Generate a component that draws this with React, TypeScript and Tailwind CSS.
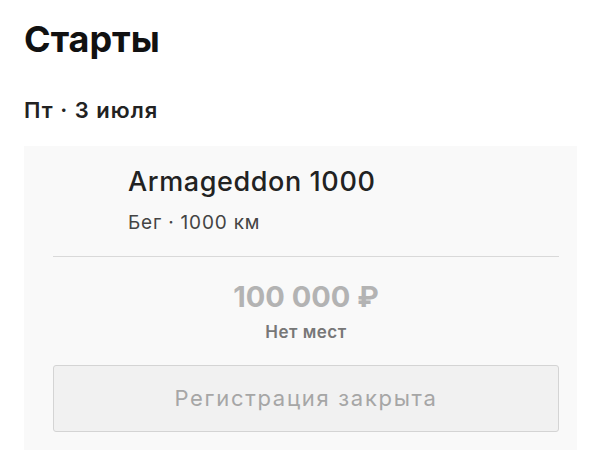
export default function App() {
  return (
    <div className="w-[600px] h-[462px] bg-white px-6 pt-[19px] font-['Inter',sans-serif] text-[#111]">
      <h1 className="text-[36px] leading-[40px] font-bold">Старты</h1>
      <div className="mt-[38px] text-[22px] leading-[26px] font-semibold tracking-[1px] text-[#222]">Пт · 3 июля</div>

      <div className="mt-[23px] w-[553px] bg-[#f9f9f9] pl-[29px] pr-[18px] pt-5 pb-[18px]">
        <div className="pl-[75px]">
          <div className="text-[27px] leading-[32px] font-medium tracking-[0.6px] text-[#222]">Armageddon 1000</div>
          <div className="mt-[13px] text-[19px] leading-[24px] tracking-[0.8px] text-[#444]">Бег · 1000 км</div>
        </div>

        <div className="mt-[21px] h-px bg-[#d9d9d9]" />

        <div className="mt-6 flex flex-col items-center">
          <div className="text-[29px] leading-[32px] font-bold text-[#b3b3b3]">100 000 ₽</div>
          <div className="mt-[9px] text-[17px] leading-[20px] font-semibold tracking-[0.5px] text-[#777]">Нет мест</div>
        </div>

        <button
          disabled
          className="mt-[23px] flex h-[67px] w-full items-center justify-center rounded-[3px] border border-[#d4d4d4] bg-[#f1f1f1] text-[22px] tracking-[1.7px] text-[#a6a6a6]"
        >
          Регистрация закрыта
        </button>
      </div>
    </div>
  );
}
